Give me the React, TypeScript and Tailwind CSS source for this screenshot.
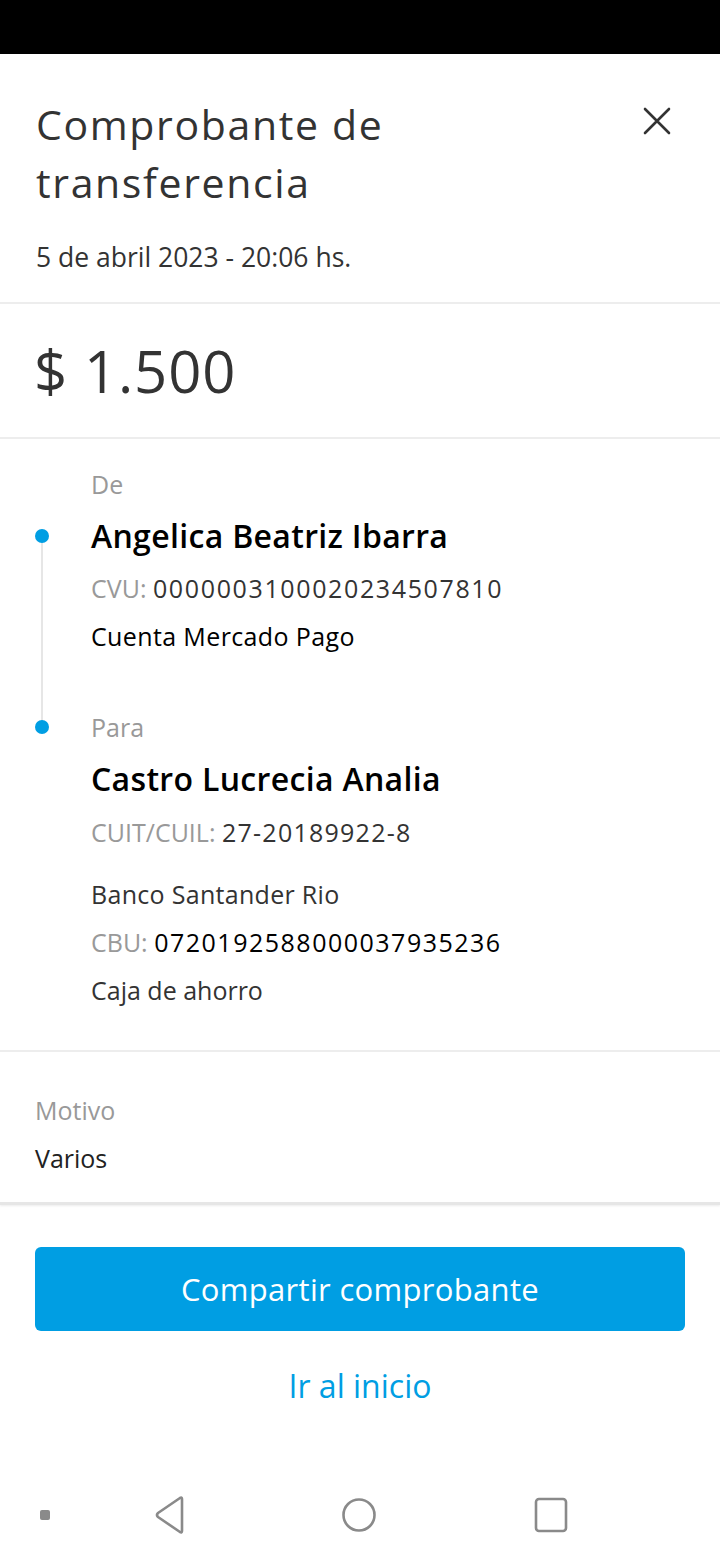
import React from "react";

const font = { fontFamily: "'Open Sans', Lato, sans-serif" };

export default function App() {
  return (
    <div className="w-[720px] h-[1560px] bg-white flex flex-col text-[#333]" style={font}>
      <div className="h-[54px] bg-black shrink-0" />

      {/* Header */}
      <div className="flex pl-[36px] pr-[48px] pt-[41px] pb-[29px] border-b-2 border-[#ededed]">
        <div className="flex-1">
          <div className="text-[41px] leading-[58px] tracking-[0.04em] text-[#333]">
            Comprobante de
            <br />
            transferencia
          </div>
          <div className="mt-[30px] text-[26.5px] leading-[32px] text-[#333]">5 de abril 2023 - 20:06 hs.</div>
        </div>
        <div className="pt-[11px]">
          <svg width="30" height="30" viewBox="0 0 30 30">
            <path d="M3 3 L27 27 M27 3 L3 27" stroke="#333" strokeWidth="2.6" strokeLinecap="round" />
          </svg>
        </div>
      </div>

      {/* Amount */}
      <div className="h-[135px] flex items-center pl-[34px] border-b-2 border-[#ededed]">
        <div className="text-[58px] leading-[64px] tracking-[0.015em] text-[#333]">$ 1.500</div>
      </div>

      {/* Parties */}
      <div className="relative pl-[91px] pt-[29px] pb-[44px] border-b-2 border-[#ededed]">
        <div className="absolute left-[41px] top-[97px] w-[2px] h-[191px] bg-[#e6e6e6]" />
        <div className="absolute left-[35px] top-[90px] w-[14px] h-[14px] rounded-full bg-[#009ee3]" />
        <div className="absolute left-[35px] top-[281px] w-[14px] h-[14px] rounded-full bg-[#009ee3]" />

        <div className="text-[25px] leading-[32px] text-[#999]">De</div>
        <div className="mt-[16px] text-[32px] leading-[40px] font-semibold tracking-[0.01em] text-black">Angelica Beatriz Ibarra</div>
        <div className="mt-[16px] text-[25px] leading-[32px]">
          <span className="text-[#999]">CVU: </span>
          <span className="text-[#333] tracking-[0.065em]">0000003100020234507810</span>
        </div>
        <div className="mt-[16px] text-[25px] leading-[32px] tracking-[0.015em] text-black">Cuenta Mercado Pago</div>

        <div className="mt-[59px] text-[25px] leading-[32px] text-[#999]">Para</div>
        <div className="mt-[16px] text-[32px] leading-[40px] font-semibold tracking-[0.01em] text-black">Castro Lucrecia Analia</div>
        <div className="mt-[17px] text-[25px] leading-[32px]">
          <span className="text-[#999]">CUIT/CUIL: </span>
          <span className="text-[#333] tracking-[0.05em]">27-20189922-8</span>
        </div>
        <div className="mt-[30px] text-[25px] leading-[32px] tracking-[0.012em] text-[#333]">Banco Santander Rio</div>
        <div className="mt-[16px] text-[25px] leading-[32px]">
          <span className="text-[#999]">CBU: </span>
          <span className="text-black tracking-[0.06em]">0720192588000037935236</span>
        </div>
        <div className="mt-[16px] text-[25px] leading-[32px] text-[#333]">Caja de ahorro</div>
      </div>

      {/* Motivo */}
      <div className="pl-[35px] pt-[42px] pb-[28px] border-b-[3px] border-[#e6e6e6] shadow-[0_1px_2px_rgba(0,0,0,0.08)]">
        <div className="text-[25px] leading-[32px] text-[#999]">Motivo</div>
        <div className="mt-[16px] text-[25px] leading-[32px] text-[#222]">Varios</div>
      </div>

      {/* Actions */}
      <div className="px-[35px] pt-[42px] flex flex-col">
        <div className="h-[84px] rounded-[6px] bg-[#009ee3] flex items-center justify-center text-white text-[31px] tracking-[0.01em]">
          Compartir comprobante
        </div>
        <div className="mt-[35px] text-center text-[32px] leading-[40px] text-[#009ee3]">Ir al inicio</div>
      </div>

      <div className="flex-1" />

      {/* Nav bar */}
      <div className="h-[90px] flex items-center pl-[40px]">
        <div className="w-[10px] h-[10px] rounded-[2px] bg-[#8a8a8a]" />
        <svg className="ml-[102px]" width="34" height="38" viewBox="0 0 34 38">
          <path d="M30 3 L30 35 Q30 37 28 36 L6 21 Q4 19 6 17 L28 2 Q30 1 30 3 Z" fill="none" stroke="#8a8a8a" strokeWidth="2.6" strokeLinejoin="round" />
        </svg>
        <svg className="ml-[155px]" width="36" height="36" viewBox="0 0 36 36">
          <circle cx="18" cy="18" r="15.5" fill="none" stroke="#8a8a8a" strokeWidth="2.6" />
        </svg>
        <svg className="ml-[156px]" width="36" height="36" viewBox="0 0 36 36">
          <rect x="3" y="2" width="30" height="32" rx="3" fill="none" stroke="#8a8a8a" strokeWidth="2.6" />
        </svg>
      </div>
    </div>
  );
}
